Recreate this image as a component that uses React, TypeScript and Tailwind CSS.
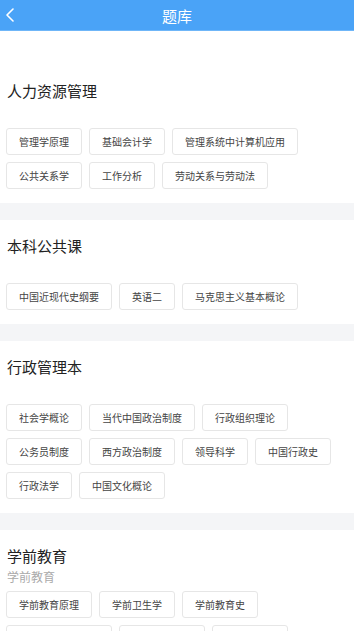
const sections: { title: string; sub?: string; items: string[] }[] = [
  {
    title: "人力资源管理",
    items: ["管理学原理", "基础会计学", "管理系统中计算机应用", "公共关系学", "工作分析", "劳动关系与劳动法"],
  },
  {
    title: "本科公共课",
    items: ["中国近现代史纲要", "英语二", "马克思主义基本概论"],
  },
  {
    title: "行政管理本",
    items: [
      "社会学概论",
      "当代中国政治制度",
      "行政组织理论",
      "公务员制度",
      "西方政治制度",
      "领导科学",
      "中国行政史",
      "行政法学",
      "中国文化概论",
    ],
  },
  {
    title: "学前教育",
    sub: "学前教育",
    items: ["学前教育原理", "学前卫生学", "学前教育史", "学前儿童发展心理", "幼儿园课程论", "学前教育学"],
  },
];

export default function App() {
  return (
    <div
      className="min-h-screen bg-white text-[#333]"
      style={{ fontFamily: '"Noto Sans CJK SC", "Noto Sans", sans-serif' }}
    >
      <div className="grid h-[31px] grid-cols-[40px_1fr_40px] items-center bg-[#4aa3f7] border-b border-[#6fb6f8]">
        <div className="flex items-center pl-[5px]">
          <svg width="9" height="14" viewBox="0 0 9 14" fill="none" stroke="white" strokeWidth="1.6">
            <path d="M8 1 L2 7 L8 13" strokeLinecap="round" strokeLinejoin="round" />
          </svg>
        </div>
        <div className="text-center text-[15px] leading-none text-white">题库</div>
        <div />
      </div>

      {sections.map((s, i) => (
        <div key={s.title}>
          {i > 0 && <div className="h-[17px] bg-[#f4f5f7]" />}
          <div className={`px-[6px] pb-[14px] ${i === 0 ? "pt-[50px]" : "pt-[16px]"}`}>
            <div className="pl-px text-[15px] leading-[20px] text-[#222]">{s.title}</div>
            {s.sub ? (
              <div className="mb-[5px] mt-[2px] pl-px text-[12px] leading-[18px] text-[#aaa]">{s.sub}</div>
            ) : (
              <div className="h-[27px]" />
            )}
            <div className="flex flex-wrap gap-[7px]">
              {s.items.map((it) => (
                <div
                  key={it}
                  className="flex h-[27px] items-center rounded-[3px] border border-[#e6e6e6] bg-white px-3 text-[10px] text-[#444]"
                >
                  {it}
                </div>
              ))}
            </div>
          </div>
        </div>
      ))}
    </div>
  );
}
